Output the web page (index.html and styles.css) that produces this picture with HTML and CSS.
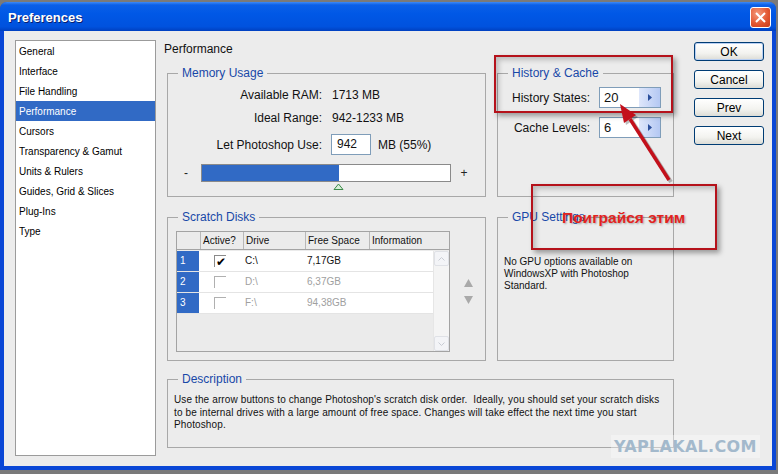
FILE: index.html
```html
<!DOCTYPE html>
<html lang="en">
<head>
  <meta charset="UTF-8">
  <title>Preferences</title>
  <link rel="stylesheet" href="styles.css">
</head>
<body>
  <div class="window">
    <div class="titlebar">
      <span class="title">Preferences</span>
      <span class="close">
        <svg width="11" height="11" viewBox="0 0 11 11"><path d="M1 1 L10 10 M10 1 L1 10" stroke="#fff" stroke-width="2"/></svg>
      </span>
    </div>

    <div class="client">
      <ul class="nav">
        <li>General</li>
        <li>Interface</li>
        <li>File Handling</li>
        <li class="active">Performance</li>
        <li>Cursors</li>
        <li>Transparency &amp; Gamut</li>
        <li>Units &amp; Rulers</li>
        <li>Guides, Grid &amp; Slices</li>
        <li>Plug-Ins</li>
        <li>Type</li>
      </ul>

      <div class="panel">
        <h1>Performance</h1>
        <div class="groups">
          <fieldset class="group memory">
            <legend>Memory Usage</legend>
            <div class="mem-grid">
              <span class="lbl">Available RAM:</span><span>1713 MB</span>
              <span class="lbl">Ideal Range:</span><span>942-1233 MB</span>
              <span class="lbl">Let Photoshop Use:</span>
              <span class="use"><span class="field">942</span>MB (55%)</span>
            </div>
            <div class="slider">
              <span class="sign">-</span>
              <div class="track">
                <div class="fill"></div>
                <svg class="thumb" width="11" height="7" viewBox="0 0 11 7"><path d="M1 6.5 L5.5 1 L10 6.5 Z" fill="#d8f0d8" stroke="#3d8a4a"/></svg>
              </div>
              <span class="sign">+</span>
            </div>
          </fieldset>

          <fieldset class="group history">
            <legend>History &amp; Cache</legend>
            <div class="hist-grid">
              <span class="lbl">History States:</span>
              <span class="spin"><span class="val">20</span><span class="btn"><svg width="4" height="7" viewBox="0 0 4 7"><path d="M0 0 L4 3.5 L0 7 Z" fill="#2b4f9c"/></svg></span></span>
              <span class="lbl">Cache Levels:</span>
              <span class="spin"><span class="val">6</span><span class="btn"><svg width="4" height="7" viewBox="0 0 4 7"><path d="M0 0 L4 3.5 L0 7 Z" fill="#2b4f9c"/></svg></span></span>
            </div>
          </fieldset>

          <fieldset class="group scratch">
            <legend>Scratch Disks</legend>
            <div class="scratch-row">
              <div class="disks">
                <div class="disk-head">
                  <span></span><span>Active?</span><span>Drive</span><span>Free Space</span><span>Information</span>
                </div>
                <div class="disk-body">
                  <div class="disk-rows">
                    <div class="disk on"><span class="num">1</span><span class="chk"><i class="box checked">&#10004;</i></span><span>C:\</span><span>7,17GB</span><span></span></div>
                    <div class="disk"><span class="num">2</span><span class="chk"><i class="box"></i></span><span>D:\</span><span>6,37GB</span><span></span></div>
                    <div class="disk"><span class="num">3</span><span class="chk"><i class="box"></i></span><span>F:\</span><span>94,38GB</span><span></span></div>
                  </div>
                  <div class="scrollbar">
                    <span class="sb-btn"><svg width="7" height="4" viewBox="0 0 7 4"><path d="M0.5 3.5 L3.5 0.5 L6.5 3.5" fill="none" stroke="#c8ccd4"/></svg></span>
                    <span class="sb-btn"><svg width="7" height="4" viewBox="0 0 7 4"><path d="M0.5 0.5 L3.5 3.5 L6.5 0.5" fill="none" stroke="#c8ccd4"/></svg></span>
                  </div>
                </div>
              </div>
              <div class="order">
                <svg width="9" height="8" viewBox="0 0 9 8"><path d="M4.5 0 L9 8 L0 8 Z" fill="#a9a9a9"/></svg>
                <svg width="9" height="8" viewBox="0 0 9 8"><path d="M0 0 L9 0 L4.5 8 Z" fill="#a9a9a9"/></svg>
              </div>
            </div>
          </fieldset>

          <fieldset class="group gpu">
            <legend>GPU Settings</legend>
            <p>No GPU options available on<br>WindowsXP with Photoshop<br>Standard.</p>
          </fieldset>

          <fieldset class="group desc">
            <legend>Description</legend>
            <p>Use the arrow buttons to change Photoshop's scratch disk order.&nbsp; Ideally, you should set your scratch disks<br>to be internal drives with a large amount of free space. Changes will take effect the next time you start<br>Photoshop.</p>
          </fieldset>
        </div>
      </div>

      <div class="buttons">
        <button class="def">OK</button>
        <button>Cancel</button>
        <button>Prev</button>
        <button>Next</button>
      </div>
    </div>

    <!-- red annotation drawn over the dialog -->
    <div class="mark mark-a"></div>
    <div class="mark mark-b"><span>Поиграйся этим</span></div>
    <svg class="arrow" width="778" height="474" viewBox="0 0 778 474">
      <g transform="translate(2 2)" opacity="0.25">
        <path d="M669 180 L630 119" stroke="#000" stroke-width="4"/>
        <path d="M620 104 L636 115 L624 123 Z" fill="#000"/>
      </g>
      <path d="M669 180 L630 119" stroke="#c3101b" stroke-width="3.5"/>
      <path d="M620 104 L636 115 L624 123 Z" fill="#c3101b"/>
    </svg>

    <div class="watermark">YAPLAKAL.COM</div>
  </div>
</body>
</html>
```

FILE: styles.css
```css
body {
  margin: 0;
  background: #7a7a7a;
  font-family: "Liberation Sans", Arial, sans-serif;
  overflow: hidden;
}

.window {
  position: relative;
  width: 776px;
  height: 468px;
  margin-top: 2px;
  display: flex;
  flex-direction: column;
  background: #0a47d6;
  border-radius: 7px 7px 0 0;
  box-sizing: border-box;
}

.titlebar {
  height: 29px;
  flex: none;
  display: flex;
  align-items: center;
  justify-content: space-between;
  padding: 2px 5px 0 8px;
  box-sizing: border-box;
  border-radius: 7px 7px 0 0;
  background: linear-gradient(#3d8af7 0, #0a5fe8 3px, #0058e6 40%, #0052de 85%, #0040c0 100%);
}

.title {
  color: #fff;
  font-weight: bold;
  font-size: 13px;
  text-shadow: 1px 1px 0 #0a1f6e;
}

.close {
  width: 19px;
  height: 19px;
  display: flex;
  align-items: center;
  justify-content: center;
  border: 1px solid #fff;
  border-radius: 3px;
  background: radial-gradient(circle at 35% 30%, #f49a7c, #e1532e 60%, #c63b1c);
}

.client {
  flex: 1;
  margin: 0 4px 4px 4px;
  background: #ececec;
  display: flex;
  padding: 9px 0 10px 11px;
}

/* category list */
.nav {
  list-style: none;
  margin: 0;
  padding: 0;
  width: 139px;
  background: #fff;
  border: 1px solid #9b9b9b;
  font-size: 10px;
}

.nav li {
  height: 20px;
  line-height: 22px;
  padding-left: 3px;
  color: #000;
}

.nav li.active {
  background: #316ac5;
  color: #fff;
}

/* main panel */
.panel {
  margin-left: 8px;
  width: 512px;
}

.panel h1 {
  margin: 2px 0 9px;
  font-size: 12px;
  font-weight: normal;
  line-height: 15px;
  color: #111;
}

.groups {
  margin-left: 3px;
  display: grid;
  grid-template-columns: 319px 177px;
  grid-template-rows: 131px 164px 87px;
  column-gap: 11px;
}

.group {
  margin: 0;
  padding: 0;
  min-width: 0;
  border: 1px solid #a8a8a8;
  box-sizing: border-box;
}

.group legend {
  margin-left: 10px;
  padding: 0 4px;
  font-size: 12px;
  line-height: 14px;
  color: #1848a8;
}

.history, .memory { height: 131px; }
.scratch, .gpu { height: 151px; margin-top: 13px; }
.desc {
  grid-column: 1 / 3;
  height: 76px;
  margin-top: 11px;
}

/* memory usage */
.mem-grid {
  display: grid;
  grid-template-columns: 154px auto;
  grid-template-rows: 14px 14px 21px;
  column-gap: 10px;
  row-gap: 9px;
  padding-top: 8px;
  font-size: 12px;
  line-height: 14px;
  color: #111;
  align-items: center;
}

.lbl { text-align: right; }

.use {
  display: flex;
  align-items: center;
  margin-left: -1px;
}

.field {
  width: 33px;
  height: 19px;
  line-height: 19px;
  padding-left: 5px;
  background: #fff;
  border: 1px solid #7f9db9;
  margin-right: 7px;
}

.slider {
  display: flex;
  align-items: center;
  margin-top: 9px;
  font-size: 12px;
}

.sign {
  width: 36px;
  text-align: center;
  color: #222;
}

.sign:last-child { width: 26px; }

.track {
  position: relative;
  width: 248px;
  height: 16px;
  border: 1px solid #8a8a8a;
  background: #fff;
  margin-left: -3px;
}

.fill {
  width: 137px;
  height: 100%;
  background: #316ac5;
}

.thumb {
  position: absolute;
  left: 131px;
  top: 18px;
}

/* history & cache */
.hist-grid {
  display: grid;
  grid-template-columns: 92px 62px;
  grid-auto-rows: 21px;
  column-gap: 9px;
  row-gap: 9px;
  padding-top: 7px;
  font-size: 12px;
  align-items: center;
  color: #111;
}

.spin {
  display: flex;
  height: 21px;
  box-sizing: border-box;
  border: 1px solid #7f9db9;
  background: #fff;
}

.spin .val {
  flex: 1;
  line-height: 19px;
  padding-left: 4px;
  font-size: 13px;
}

.spin .btn {
  width: 21px;
  display: flex;
  align-items: center;
  justify-content: center;
  background: linear-gradient(90deg, #dfe7fb, #b4c8f3);
}

/* scratch disks */
.scratch-row {
  display: flex;
  padding: 7px 0 0 8px;
}

.disks {
  width: 272px;
  height: 119px;
  border: 1px solid #a3a3a3;
  background: #ebebeb;
  font-size: 10px;
}

.disk-head, .disk {
  display: grid;
  grid-template-columns: 23px 43px 62px 64px 1fr;
}

.disk-head {
  height: 17px;
  line-height: 17px;
  border-bottom: 1px solid #a3a3a3;
  color: #111;
}

.disk-head span {
  padding-left: 2px;
  border-left: 1px solid #b8b8b8;
}

.disk-head span:first-child { border-left: 0; }

.disk-body {
  display: flex;
  margin-top: 1px;
  height: 100px;
}

.disk-rows { flex: 1; }

.disk {
  grid-template-columns: 22px 44px 62px 64px 1fr;
  height: 20px;
  line-height: 20px;
  background: #fff;
  border-bottom: 1px solid #e4e4e4;
  color: #a0a0a0;
}

.disk.on { color: #111; }

.disk span { padding-left: 2px; }

.disk .num {
  background: #316ac5;
  color: #fff;
  padding-left: 3px;
}

.disk .chk {
  display: flex;
  align-items: center;
  padding-left: 15px;
}

.box {
  width: 12px;
  height: 12px;
  box-sizing: border-box;
  border-top: 1px solid #b0b0b0;
  border-left: 1px solid #b0b0b0;
  font-style: normal;
  font-size: 12px;
  line-height: 12px;
  text-align: center;
  color: #000;
}

.box.checked { border-color: #8a8a8a; }

.scrollbar {
  width: 15px;
  display: flex;
  flex-direction: column;
  justify-content: space-between;
  background: #f4f4f4;
  border-left: 1px solid #e6e6e6;
}

.sb-btn {
  height: 15px;
  display: flex;
  align-items: center;
  justify-content: center;
  background: #f3f4f7;
  border: 1px solid #dfe1e6;
  border-radius: 2px;
  box-sizing: border-box;
}

.order {
  display: flex;
  flex-direction: column;
  gap: 9px;
  padding: 48px 0 0 14px;
}

/* gpu & description */
.gpu p {
  margin: 0;
  padding: 32px 6px 0;
  font-size: 10px;
  line-height: 12px;
  color: #111;
}

.desc p {
  margin: 0;
  padding: 8px 6px 0;
  font-size: 10px;
  line-height: 12.5px;
  letter-spacing: 0.12px;
  color: #111;
}

/* buttons */
.buttons {
  margin-left: 18px;
  margin-top: 2px;
  display: flex;
  flex-direction: column;
  gap: 9px;
}

.buttons button {
  width: 70px;
  height: 19px;
  padding: 0;
  font-family: "Liberation Sans", Arial, sans-serif;
  font-size: 12px;
  color: #000;
  border: 1px solid #003c74;
  border-radius: 3px;
  background: linear-gradient(#ffffff, #f3f3ef 60%, #dcdcd6);
}

.buttons button.def { box-shadow: inset 0 0 0 1px #b8cff3; }

/* annotation overlays */
.mark {
  position: absolute;
  border: 2px solid #b5121b;
  box-shadow: 3px 3px 5px rgba(0, 0, 0, 0.35), inset 3px 3px 5px rgba(0, 0, 0, 0.2);
}

.mark-a {
  left: 494px;
  top: 53px;
  width: 175px;
  height: 54px;
}

.mark-b {
  left: 531px;
  top: 182px;
  width: 182px;
  height: 62px;
}

.mark-b span {
  position: absolute;
  left: 29px;
  top: 23px;
  font-size: 15.5px;
  font-weight: bold;
  color: #e2231f;
  white-space: nowrap;
  text-shadow: 1px 1px 2px rgba(0, 0, 0, 0.3);
}

.arrow {
  position: absolute;
  left: 0;
  top: -2px;
  pointer-events: none;
}

.watermark {
  position: absolute;
  left: 611px;
  top: 433px;
  padding: 2px 3px;
  font-family: "DejaVu Sans", sans-serif;
  font-size: 16px;
  font-weight: bold;
  letter-spacing: 0.3px;
  color: #a3b9cc;
  background: rgba(255, 255, 255, 0.35);
}
```
